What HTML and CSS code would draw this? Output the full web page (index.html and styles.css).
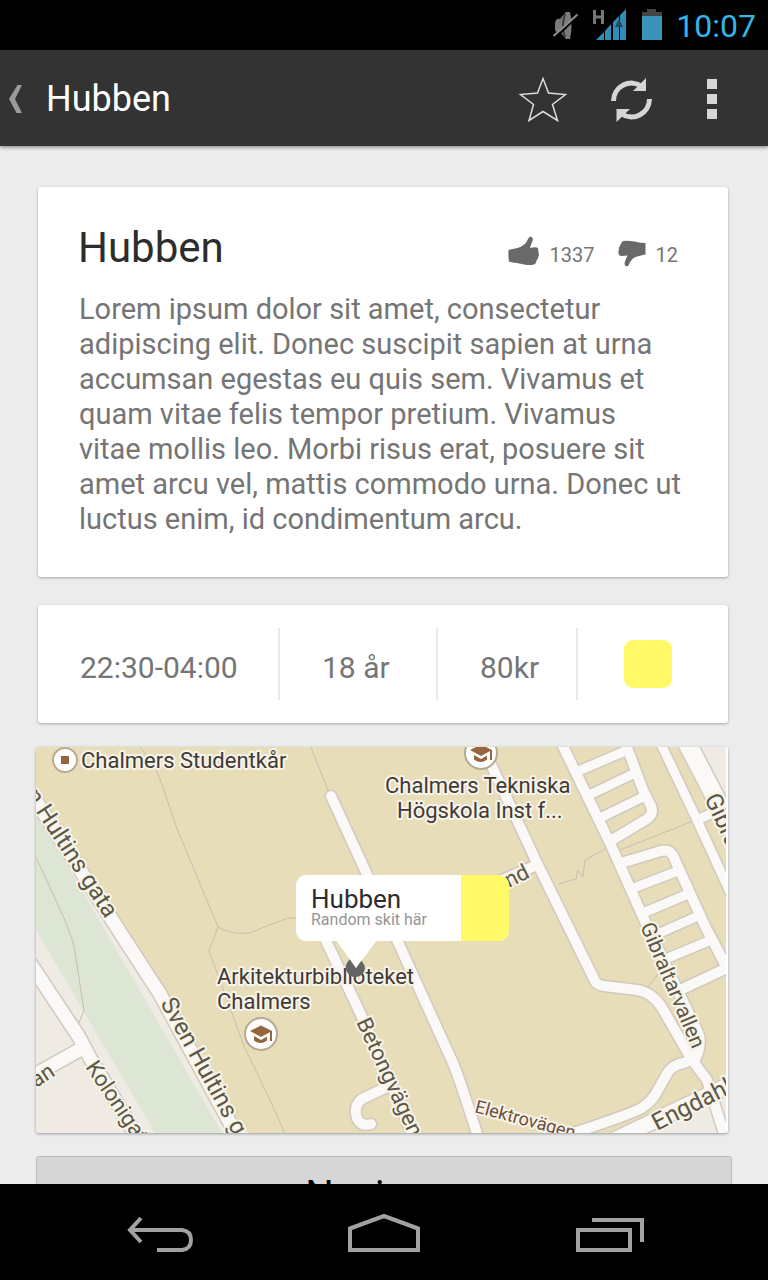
FILE: index.html
```html
<!DOCTYPE html>
<html lang="sv">
<head>
<meta charset="utf-8">
<meta name="viewport" content="width=device-width, initial-scale=1">
<title>Hubben</title>
<link rel="stylesheet" href="styles.css">
</head>
<body>
<div class="status-bar">
  <svg class="icon-mute" viewBox="552 8 28 34" width="28" height="34" aria-hidden="true">
    <path d="M555 23q1-5 5-4l6-7h4q3 14 0 27h-4l-6-7q-5 1-5-3z" fill="#7b7b7b"/>
    <path d="M565 14q-4 12 0 23" fill="none" stroke="#3c3c3c" stroke-width="2"/>
    <path d="M555 38L579 15" stroke="#000" stroke-width="2"/>
    <path d="M553.500 36L577.500 14.500" stroke="#8c8c8c" stroke-width="2"/>
  </svg>
  <svg class="icon-signal" viewBox="592 8 36 34" width="36" height="34" aria-hidden="true">
    <path d="M594.500 10v14M602.500 10v14M594 17h8" stroke="#777" stroke-width="3" fill="none"/>
    <path d="M596 40L604 32V40zM605 40V31l6-7v16zM613 40V22l6-6v24zM620 40V15l6-6v31z" fill="#2f8db8"/>
    <path d="M615 27l4-8 4 8z" fill="#24485a"/>
  </svg>
  <svg class="icon-battery" viewBox="641 8 22 34" width="22" height="34" aria-hidden="true">
    <path d="M642 24V12h5V9h9v3h6v12z" fill="#444"/><path d="M642 16h20v24h-20z" fill="#3a93b9"/>
  </svg>
  <time class="clock">10:07</time>
</div>

<header class="action-bar">
  <button class="up" aria-label="Back">
    <svg viewBox="8 82 16 32" width="16" height="32"><path d="M17.500 84H22l-7 14 7 14h-5.500L9 98z" fill="#9b9b9b"/></svg>
  </button>
  <h1 class="bar-title">Hubben</h1>
  <button class="action" aria-label="Favourite">
    <svg viewBox="518 74 50 50" width="50" height="50"><path d="M543 78.500L548.500 93L565.500 94.500L552.500 104.500L557.500 120.500L543 111.500L529 120.500L533.500 104.500L520.500 94.500L537.500 93z" fill="none" stroke="#dcdcdc" stroke-width="1.500"/></svg>
  </button>
  <button class="action" aria-label="Refresh">
    <svg viewBox="606 74 50 50" width="50" height="50"><g fill="none" stroke="#d6d6d6" stroke-width="5"><path d="M613.500 101A18 18 0 0 1 642 86.500"/><path d="M649.500 99A18 18 0 0 1 621 113.500"/></g><path d="M646 78v13h-13zM616.500 122v-13H630z" fill="#d6d6d6"/></svg>
  </button>
  <button class="action action-more" aria-label="More options">
    <svg viewBox="700 74 24 50" width="24" height="50"><path d="M707 79h10v10h-10zM707 94h10v10h-10zM707 109h10v10h-10z" fill="#d6d6d6"/></svg>
  </button>
</header>

<main class="content">
  <article class="card intro">
    <div class="intro-head">
      <h2 class="place">Hubben</h2>
      <div class="votes">
        <button class="vote">
          <svg viewBox="506 234 36 36" width="36" height="36" aria-hidden="true"><path d="M507.500 251q4-1 9-2 6-2 9-6l2-4q2-3 4 0 1 2-1 5l-1.500 5q4-1 7-.5 2 1 1 3 1 1 .5 3 1 2-.5 4 0 2-1.500 3 0 3-2.500 4-4 1-10 0l-7-1.500q-5-.5-8-1.500-1-6-.5-11z" fill="#696969"/></svg>
          <span>1337</span>
        </button>
        <button class="vote">
          <svg viewBox="616 234 34 36" width="34" height="36" aria-hidden="true"><path d="M646.500 244q-5 0-11-1.500-7-1-11-.5-2 .5-2.500 3-1.500 1-1.500 3-1 1-.5 3-1 1-.5 3 0 3 3 3l6-.5q-1 2-2.500 6-1 3 .5 4.500 3 1 4-3 3-5 6-6 6-2 10-2.500z" fill="#696969"/></svg>
          <span>12</span>
        </button>
      </div>
    </div>
    <p class="description">Lorem ipsum dolor sit amet, consectetur adipiscing elit. Donec suscipit sapien at urna accumsan egestas eu quis sem. Vivamus et quam vitae felis tempor pretium. Vivamus<br>vitae mollis leo. Morbi risus erat, posuere sit<br>amet arcu vel, mattis commodo urna. Donec ut luctus enim, id condimentum arcu.</p>
  </article>

  <ul class="card facts">
    <li class="fact">22:30-04:00</li>
    <li class="fact">18 år</li>
    <li class="fact">80kr</li>
    <li class="fact fact-swatch"><span class="swatch"></span></li>
  </ul>

  <section class="map" aria-label="Map">
    <svg class="map-canvas" viewBox="36 747 690 386" preserveAspectRatio="xMidYMid slice">
      <defs>
        <g id="roads">
          <path class="w13" d="M20 776L125 940L160 994L242 1145"/>
          <path class="w13" d="M26 957L79 1037L90 1058L145 1150M81 1049L20 1083"/>
          <path class="w10" d="M331 796L398 942L453 1063Q460 1080 479 1140"/>
          <path class="w10" d="M320 928L363 1019L415 1140M387 1087L362 1099Q353 1106 357 1118Q361 1127 371 1124"/>
          <path class="w10" d="M482 745L537 863L595 981Q597 985 604 986L637 990Q651 992 661 1006L692 1060L707 1080L726 1140M537 865L495 883"/>
          <path class="w10" d="M692 1060L677 1065Q671 1067 667 1074L655 1095Q650 1103 640 1109Q620 1118 570 1134"/>
          <path class="w10" d="M561 742L610 843L643 917L699 1035Q702 1046 694 1062"/>
          <path class="w10" d="M625 742L643 790L651 806Q654 814 647 819L612 840"/>
          <path class="w10" d="M621 863L661 851Q671 848 675 860L705 926L727 968L680 990"/>
          <path class="w9" d="M576 772L623 752M587 796L633 774M598 819L643 797M631 889L678 871M643 913L688 894M653 936L698 916M663 960L711 940"/>
          <path class="w9" d="M660 742L697 820L731 894M699 819L720 810"/>
          <path class="w18" d="M685 739L735 835"/>
          <path class="w15" d="M610 1142L740 1080"/>
        </g>
      </defs>
      <path fill="#efebe4" d="M36 747h692v386H36z"/>
      <path fill="#e7ddb9" d="M36 747H693L728 815V1088L625 1133H238L160 994L125 940L36 800z"/>
      <path fill="#dde6d5" d="M36 812L105 930L222 1133H155L36 930z"/>
      <g class="trail">
        <path d="M138 745Q154 763 160 779L176 826L218 927L209 951L244 1046L270 1100L286 1136M218 927Q232 935 249 933L288 918H300M310 745L329 793M36 857L64 918Q72 938 74 946L84 1010L78 1025M558 884L576 879L578 870L583 877L585 860L605 849M615 852L693 821M648 987L658 974"/>
      </g>
      <use href="#roads" class="road-edge"/>
      <use href="#roads" class="road-fill"/>
      <g class="road-label">
        <text class="large" transform="translate(25 795) rotate(57)">n Hultins gata</text>
        <text class="large" transform="translate(160 1003) rotate(61)">Sven Hultins gata</text>
        <text transform="translate(85 1067) rotate(56)">Kolonigatan</text>
        <text transform="translate(36 1088) rotate(-33)">an</text>
        <text transform="translate(356 1022) rotate(65)">Betongvägen</text>
        <text transform="translate(509 888) rotate(-27)">nd</text>
        <text class="mid" transform="translate(640 926) rotate(67)">Gibraltarvallen</text>
        <text class="large" transform="translate(704 798) rotate(65)">Gibraltar</text>
        <text class="large" transform="translate(657 1131) rotate(-27)">Engdahls</text>
        <text class="small" transform="translate(474 1112) rotate(15)">Elektrovägen</text>
      </g>
      <g class="poi-label">
        <text x="81" y="768">Chalmers Studentkår</text>
        <text x="385" y="793">Chalmers Tekniska</text>
        <text x="397" y="818">Högskola Inst f...</text>
        <text x="217" y="984">Arkitekturbiblioteket</text>
        <text x="217" y="1009">Chalmers</text>
      </g>
      <g class="poi"><circle cx="65" cy="760" r="12"/><circle cx="481" cy="753" r="16"/><circle cx="261" cy="1034" r="16"/></g>
      <path fill="#94653e" d="M61 756h8v8h-8z"/>
      <g id="cap" fill="#94653e"><path d="M250 1031L261 1025.500L272 1031L261 1037z"/><path d="M270 1031h2v10h-2zM254 1036l7 4 6-3.500v4q-6 5-13 0z"/></g>
      <use href="#cap" x="220" y="-281"/>
      <path fill="#646464" d="M350 959Q343 966 347 972Q350 977 355 977Q361 977 364 972Q367 966 360 959L356 968z"/>
      <path fill="#fff" d="M336 940H377L356 968z"/>
    </svg>
    <button class="callout">
      <span class="callout-text"><strong class="callout-title">Hubben</strong><span class="callout-sub">Random skit här</span></span>
      <span class="callout-colour"></span>
    </button>
  </section>

  <button class="navigate">Navigera</button>
</main>

<nav class="system-nav" aria-label="System">
  <button class="sys" aria-label="Back"><svg viewBox="124 1212 72 44" width="72" height="44"><path d="M130 1230H182Q191 1231 191 1240T182 1250H157M141 1218L130 1230L141 1242" fill="none" stroke="#a2a2a2" stroke-width="4"/></svg></button>
  <button class="sys" aria-label="Home"><svg viewBox="346 1212 76 44" width="76" height="44"><path d="M350 1250V1228.500L384 1216L418 1228.500V1250z" fill="none" stroke="#a2a2a2" stroke-width="4"/></svg></button>
  <button class="sys" aria-label="Recent apps"><svg viewBox="574 1212 72 44" width="72" height="44"><path d="M578 1230h52v20h-52zM592 1220h50v22" fill="none" stroke="#a2a2a2" stroke-width="4"/></svg></button>
</nav>
</body>
</html>
```
FILE: styles.css
```css
* { box-sizing: border-box; }

body {
  margin: 0;
  height: 100vh;
  display: flex;
  flex-direction: column;
  background: #ececec;
  color: #757575;
  font-family: Roboto, "Noto Sans", sans-serif;
}

button {
  margin: 0;
  padding: 0;
  border: 0;
  background: none;
  color: inherit;
  font: inherit;
}

svg { display: block; }
h1, h2, p, ul { margin: 0; padding: 0; font-weight: 400; }

.status-bar {
  flex: none;
  height: 50px;
  padding: 0 12px;
  display: flex;
  align-items: center;
  justify-content: flex-end;
  background: #000;
}
.icon-signal { margin: 0 13px 0 12px; }
.clock {
  margin-left: 13px;
  padding-top: 2px;
  color: #33b5e5;
  font-size: 32px;
}

.action-bar {
  position: relative;
  flex: none;
  height: 96px;
  padding: 2px 44px 0 8px;
  display: flex;
  align-items: center;
  background: #333;
  box-shadow: 0 1px 4px rgba(0, 0, 0, .5);
}
.bar-title {
  flex: 1;
  padding-left: 22px;
  color: #fff;
  font-size: 36px;
}
.action { margin-left: 38px; }
.action-more { margin-left: 44px; }

.content {
  flex: 1;
  min-height: 0;
  overflow: hidden;
  padding: 41px 36px 0;
}

.card {
  margin: 0 4px 28px 2px;
  background: #fff;
  border-radius: 3px;
  box-shadow: 0 1px 3px rgba(0, 0, 0, .3);
}

.intro { padding: 36px 36px 40px 40px; }
.intro-head {
  display: flex;
  justify-content: space-between;
  align-items: center;
  padding-right: 14px;
}
.place {
  color: #2d2d2d;
  font-size: 42px;
  line-height: 50px;
}
.votes { display: flex; gap: 20px; padding-top: 12px; }
.vote {
  display: flex;
  align-items: center;
  gap: 7px;
  font-size: 20px;
}
.vote svg { margin-top: -6px; }
.vote span { padding-top: 2px; }
.description {
  padding: 19px 0 0 1px;
  font-size: 29px;
  line-height: 35px;
}

.facts {
  display: grid;
  grid-template-columns: 242fr 158fr 140fr 150fr;
  margin-bottom: 24px;
  padding: 23px 0;
  list-style: none;
}
.fact {
  height: 72px;
  padding: 6px 0 0 42px;
  display: flex;
  align-items: center;
  border-right: 2px solid #e9e9e9;
  font-size: 30px;
}
.fact-swatch {
  padding: 0 0 0 46px;
  border: 0;
}
.swatch {
  width: 48px;
  height: 48px;
  border-radius: 9px;
  background: #fff968;
}

.map {
  position: relative;
  margin: 0 4px 23px 0;
  border-right: 2px solid #fff;
  border-radius: 3px;
  overflow: hidden;
  box-shadow: 0 1px 3px rgba(0, 0, 0, .35);
}
.map-canvas { width: 100%; height: 386px; }
.trail { fill: none; stroke: #c9bdaf; stroke-width: 1; }
.road-edge, .road-fill { fill: none; stroke-linecap: round; stroke-linejoin: round; }
.road-edge { stroke: #d1c9be; --edge: 3px; }
.road-fill { stroke: #faf9f7; --edge: 0px; }
.w9 { stroke-width: calc(9px + var(--edge)); }
.w10 { stroke-width: calc(10px + var(--edge)); }
.w13 { stroke-width: calc(13px + var(--edge)); }
.w15 { stroke-width: calc(15px + var(--edge)); }
.w18 { stroke-width: calc(18px + var(--edge)); }
.road-label, .poi-label {
  font-size: 22px;
  stroke: #f7f3e8;
  stroke-width: 4px;
  stroke-linejoin: round;
  paint-order: stroke;
}
.road-label { fill: #5b5746; }
.road-label .large { font-size: 24px; }
.road-label .mid { font-size: 21px; }
.road-label .small { font-size: 18px; fill: #6b5040; }
.poi-label { fill: #3f3a37; }
.poi { fill: #fff; stroke: #b5ab95; stroke-width: 2; }

.callout {
  position: absolute;
  left: calc(50% - 85px);
  top: 128px;
  width: 213px;
  height: 66px;
  display: flex;
  overflow: hidden;
  border-radius: 10px;
  background: #fff;
  text-align: left;
}
.callout-text {
  flex: 1;
  padding: 9px 0 0 15px;
  display: flex;
  flex-direction: column;
}
.callout-title {
  color: #2d2d2d;
  font-size: 26px;
  font-weight: 400;
  line-height: 31px;
}
.callout-sub {
  color: #959595;
  font-size: 16px;
  line-height: 10px;
}
.callout-colour { width: 48px; height: 100%; background: #fff968; }

.navigate {
  width: 100%;
  height: 78px;
  border: 1px solid #b9b9b9;
  border-radius: 3px;
  background: #d6d6d6;
  color: #000;
  font-size: 40px;
}

.system-nav {
  flex: none;
  height: 96px;
  padding: 4px 122px 0 124px;
  display: flex;
  align-items: center;
  justify-content: space-between;
  background: #000;
}
.sys:nth-child(2) { margin-right: 2px; }
```
